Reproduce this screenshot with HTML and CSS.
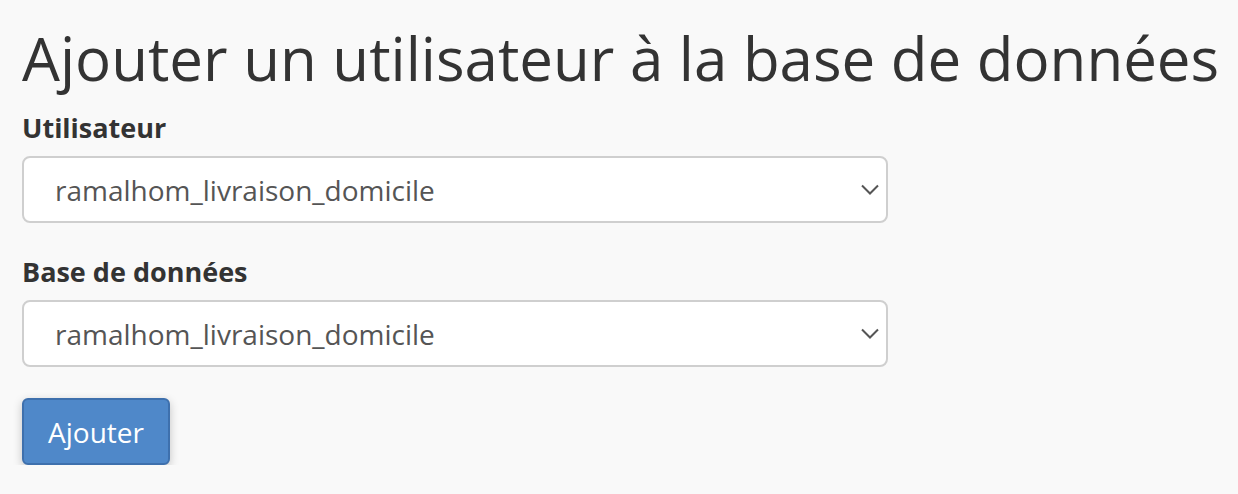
FILE: index.html
```html
<!DOCTYPE html>
<html lang="fr">
<head>
<meta charset="utf-8">
<title>Ajouter un utilisateur à la base de données</title>
<link rel="stylesheet" href="styles.css">
</head>
<body>
<main class="page">
  <h1 class="title">Ajouter un utilisateur à la base de données</h1>
  <div class="field">
    <label class="label" for="user">Utilisateur</label>
    <div class="select" id="user">
      <span class="select-value">ramalhom_livraison_domicile</span>
      <svg class="chevron" width="18" height="11" viewBox="0 0 18 11"><path d="M1 1.5l8 8 8-8" fill="none" stroke="#555" stroke-width="2"/></svg>
    </div>
  </div>
  <div class="field">
    <label class="label" for="db">Base de données</label>
    <div class="select" id="db">
      <span class="select-value">ramalhom_livraison_domicile</span>
      <svg class="chevron" width="18" height="11" viewBox="0 0 18 11"><path d="M1 1.5l8 8 8-8" fill="none" stroke="#555" stroke-width="2"/></svg>
    </div>
  </div>
  <div class="actions">
    <button class="btn" type="button">Ajouter</button>
  </div>
</main>
</body>
</html>
```
FILE: styles.css
```css
html, body {
  margin: 0;
  background: #f9f9f9;
}
body {
  font-family: "Open Sans", "Noto Sans", sans-serif;
  color: #333;
}
.page {
  padding: 17px 22px 0 22px;
  display: flex;
  flex-direction: column;
}
.title {
  margin: 0 0 11px 0;
  font-size: 60px;
  font-weight: 400;
  line-height: 82px;
  color: #333;
  white-space: nowrap;
}
.field {
  display: flex;
  flex-direction: column;
  width: 866px;
  margin-bottom: 31px;
}
.label {
  font-size: 27px;
  font-weight: 700;
  line-height: 36px;
  margin-bottom: 10px;
  color: #333;
}
.select {
  height: 67px;
  box-sizing: border-box;
  border: 2px solid #cfcfcf;
  border-radius: 8px;
  background: #fff;
  display: flex;
  align-items: center;
  justify-content: space-between;
  padding: 0 7px 0 31px;
}
.select-value {
  font-size: 28px;
  color: #555;
}
.actions {
  display: flex;
}
.btn {
  font-family: inherit;
  font-size: 28px;
  line-height: 38px;
  color: #fff;
  background: #4f88c9;
  border: 2px solid #3e70ad;
  border-radius: 6px;
  height: 67px;
  width: 148px;
  padding: 0;
  box-shadow: 0 3px 10px rgba(0, 0, 0, 0.22);
}
```
